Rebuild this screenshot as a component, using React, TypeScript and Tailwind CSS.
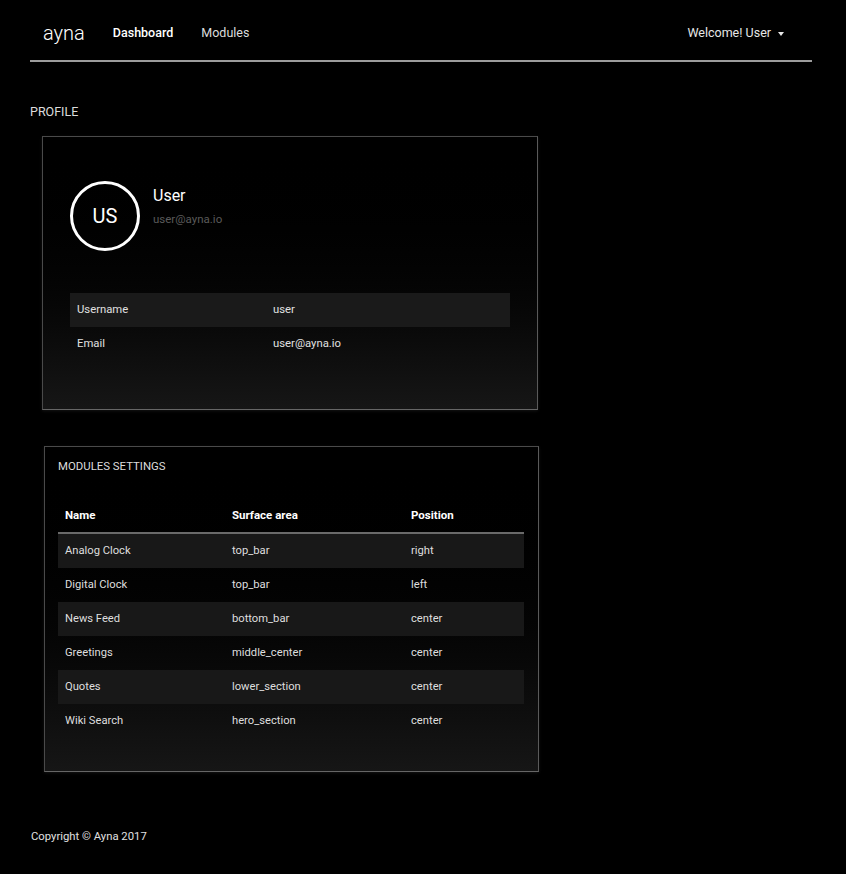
import React from "react";

const modules = [
  ["Analog Clock", "top_bar", "right"],
  ["Digital Clock", "top_bar", "left"],
  ["News Feed", "bottom_bar", "center"],
  ["Greetings", "middle_center", "center"],
  ["Quotes", "lower_section", "center"],
  ["Wiki Search", "hero_section", "center"],
];

export default function App() {
  return (
    <div className="min-h-[874px] bg-black text-[#e6e6e6] [font-family:Roboto,'Liberation_Sans',sans-serif]">
      <div className="px-[30px]">
        <nav className="mr-[4px] flex h-[62px] items-center border-b-2 border-[#9c9c9c] pl-[13px] pr-[28px] pt-[6px]">
          <span className="text-[20px] font-light text-white leading-none">ayna</span>
          <span className="ml-[28px] text-[12.5px] font-medium text-white">Dashboard</span>
          <span className="ml-[28px] text-[12.5px] text-[#dcdcdc]">Modules</span>
          <span className="ml-auto flex items-center text-[12.5px] text-[#e6e6e6]">
            Welcome! User
            <span className="ml-[7px] mt-[1px] h-0 w-0 border-l-[3.5px] border-r-[3.5px] border-t-[4px] border-l-transparent border-r-transparent border-t-[#e6e6e6]" />
          </span>
        </nav>

        <div className="mt-[42px] text-[12.5px] leading-[16px] text-[#dcdcdc]">PROFILE</div>

        <div className="ml-[12px] mt-[16px] w-[496px] border border-[#4a4a4a] border-b-[#666] border-r-[#5a5a5a] bg-gradient-to-b from-[#000000] to-[#161616] px-[27px] pb-[48px] pt-[44px] shadow-[0_1px_3px_rgba(255,255,255,0.08)]">
          <div className="flex">
            <div className="flex h-[70px] w-[70px] shrink-0 items-center justify-center rounded-full border-[3px] border-white text-[20px] text-white">
              US
            </div>
            <div className="ml-[13px] mt-[5px]">
              <div className="text-[16px] leading-[20px] text-white">User</div>
              <div className="mt-[5px] text-[11.5px] leading-[16px] text-[#5a5a5a]">user@ayna.io</div>
            </div>
          </div>
          <div className="mt-[42px] text-[11.3px] text-[#e0e0e0]">
            <div className="flex h-[34px] items-center bg-[#1a1a1a]">
              <div className="w-[196px] pl-[7px]">Username</div>
              <div className="pl-[7px]">user</div>
            </div>
            <div className="flex h-[34px] items-center">
              <div className="w-[196px] pl-[7px]">Email</div>
              <div className="pl-[7px]">user@ayna.io</div>
            </div>
          </div>
        </div>

        <div className="ml-[14px] mt-[36px] w-[495px] border border-[#4a4a4a] border-b-[#666] border-r-[#5a5a5a] bg-gradient-to-b from-[#000000] to-[#161616] px-[13px] pb-[33px] pt-[12px] shadow-[0_1px_3px_rgba(255,255,255,0.08)]">
          <div className="text-[11.4px] leading-[14px] text-[#dcdcdc]">MODULES SETTINGS</div>
          <div className="mt-[25px] w-[466px] text-[11.2px] text-[#dedede]">
            <div className="flex h-[36px] items-center border-b-2 border-[#6a6a6a] pt-[1px] text-[11.5px] font-bold text-white">
              <div className="w-[167px] pl-[7px]">Name</div>
              <div className="w-[179px] pl-[7px]">Surface area</div>
              <div className="pl-[7px]">Position</div>
            </div>
            {modules.map((m, i) => (
              <div
                key={m[0]}
                className={"flex h-[34px] items-center " + (i % 2 === 0 ? "bg-[#181818]" : "")}
              >
                <div className="w-[167px] pl-[7px]">{m[0]}</div>
                <div className="w-[179px] pl-[7px]">{m[1]}</div>
                <div className="pl-[7px]">{m[2]}</div>
              </div>
            ))}
          </div>
        </div>

        <div className="ml-[1px] mt-[57px] text-[11.3px] leading-[16px] text-[#e0e0e0]">
          Copyright © Ayna 2017
        </div>
      </div>
    </div>
  );
}
